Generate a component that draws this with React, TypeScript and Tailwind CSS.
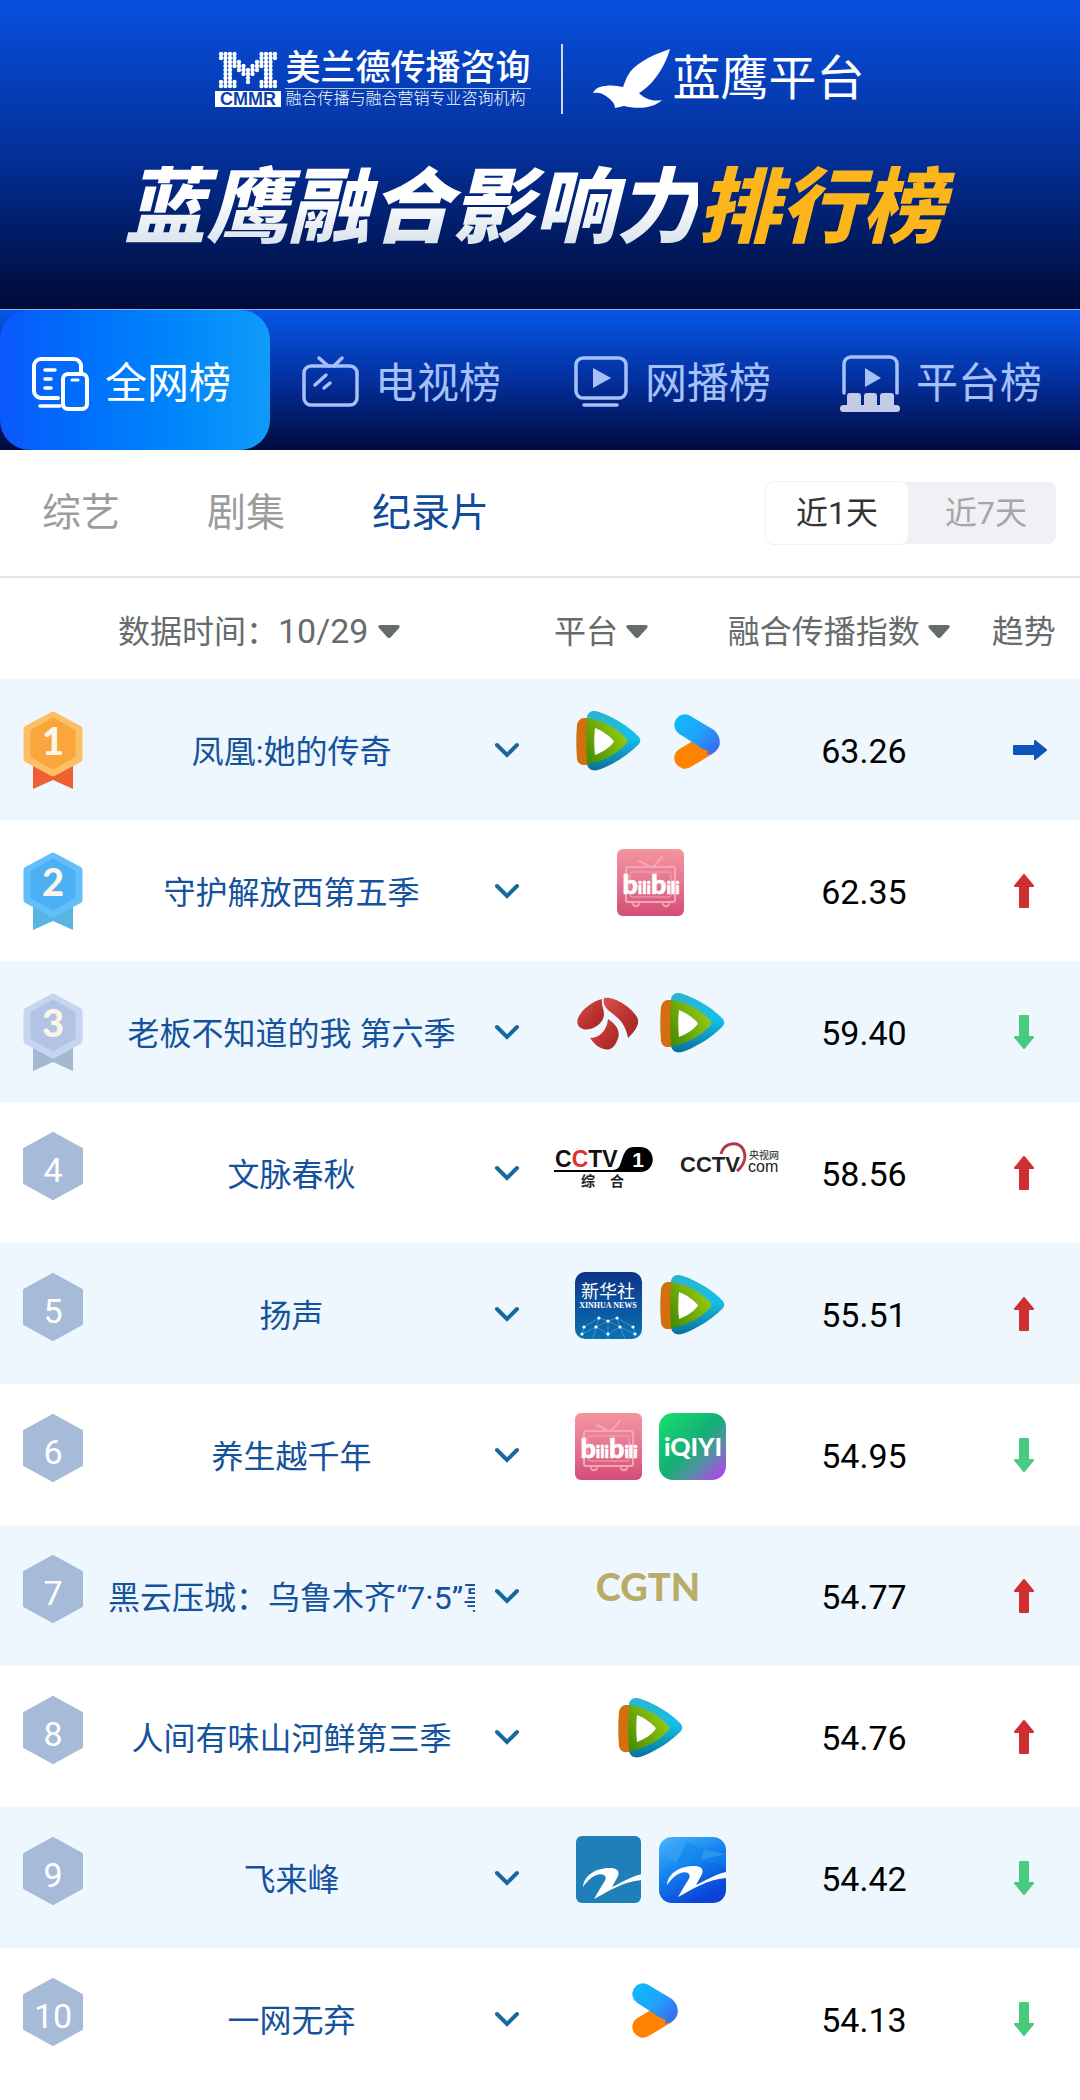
import type { ReactNode } from 'react';

type Trend = 'up' | 'down' | 'flat';

const BOARDS = [
  { name: '全网榜', icon: <AllIcon />, active: true },
  { name: '电视榜', icon: <TvIcon />, active: false },
  { name: '网播榜', icon: <WebIcon />, active: false },
  { name: '平台榜', icon: <PlatformIcon />, active: false },
];

const CATEGORIES = ['综艺', '剧集', '纪录片'];

const ROWS: { title: string; platforms: ReactNode[]; score: string; trend: Trend }[] = [
  { title: '凤凰:她的传奇', platforms: [<Tencent />, <Youku />], score: '63.26', trend: 'flat' },
  { title: '守护解放西第五季', platforms: [<Bilibili />], score: '62.35', trend: 'up' },
  { title: '老板不知道的我 第六季', platforms: [<Jiangsu />, <Tencent />], score: '59.40', trend: 'down' },
  { title: '文脉春秋', platforms: [<Cctv1 />, <CctvCom />], score: '58.56', trend: 'up' },
  { title: '扬声', platforms: [<Xinhua />, <Tencent />], score: '55.51', trend: 'up' },
  { title: '养生越千年', platforms: [<Bilibili />, <Iqiyi />], score: '54.95', trend: 'down' },
  { title: '黑云压城：乌鲁木齐“7·5”事件', platforms: [<Cgtn />], score: '54.77', trend: 'up' },
  { title: '人间有味山河鲜第三季', platforms: [<Tencent />], score: '54.76', trend: 'up' },
  { title: '飞来峰', platforms: [<Zhejiang />, <ZhejiangApp />], score: '54.42', trend: 'down' },
  { title: '一网无弃', platforms: [<Youku />], score: '54.13', trend: 'down' },
];

function AllIcon() {
  return (
    <svg viewBox="0 0 58 58" className="size-[58px]" fill="none" stroke="currentColor" strokeWidth="4" strokeLinecap="round">
      <path d="M27 44H10a7 7 0 0 1-7-7V12a7 7 0 0 1 7-7h33a7 7 0 0 1 7 7v6" />
      <path d="M14 16h10M14 25h6M14 34h6" strokeWidth="3.5" />
      <path d="M9 52h20" strokeWidth="3.5" />
      <rect x="32" y="20" width="24" height="35" rx="5" />
      <path d="M41 26h6" strokeWidth="3" />
    </svg>
  );
}

function TvIcon() {
  return (
    <svg viewBox="0 0 58 58" className="size-[58px]" fill="none" stroke="currentColor" strokeWidth="3.5" strokeLinecap="round">
      <rect x="3" y="12" width="53" height="39" rx="7" />
      <path d="M18 4l9 8M41 4l-8 8M25 21L14 31M29 29l-6 5" />
    </svg>
  );
}

function WebIcon() {
  return (
    <svg viewBox="0 0 58 58" className="size-[58px]" fill="none" stroke="currentColor" strokeWidth="3.5" strokeLinecap="round">
      <rect x="5" y="4" width="50" height="40" rx="7" />
      <path d="M13 51h33" />
      <path d="M22 14v20l18-10z" fill="currentColor" stroke="none" />
    </svg>
  );
}

function PlatformIcon() {
  return (
    <svg viewBox="0 0 60 58" className="h-[58px] w-[60px]" fill="none" stroke="currentColor" strokeWidth="3.5" strokeLinecap="round">
      <path d="M4 39V10a7 7 0 0 1 7-7h39a7 7 0 0 1 7 7v29" />
      <path d="M25 14v19l16-9z" fill="currentColor" stroke="none" />
      <g fill="currentColor" stroke="none" className="text-[#c3cbe6]">
        <rect x="7" y="39" width="14" height="15" rx="3" />
        <rect x="24" y="39" width="13" height="15" rx="3" />
        <rect x="40" y="39" width="14" height="15" rx="3" />
        <rect x="0" y="51" width="60" height="7" rx="3.5" />
      </g>
    </svg>
  );
}

const M_ROWS = [
  '1111000001111',
  '1111000001111',
  '0111100011110',
  '0111110111110',
  '0110111110110',
  '0110011100110',
  '0110001000110',
  '1111001001111',
  '1111000001111',
];

function CmmrLogo() {
  return (
    <svg viewBox="0 0 66 56" className="h-14 w-[66px]">
      <g fill="#fff">
        {M_ROWS.map((row, y) =>
          row.split('').map((dot, x) =>
            dot === '1' ? <circle key={`${x}-${y}`} cx={6 + x * 4.5} cy={3 + y * 4} r="2.2" /> : null,
          ),
        )}
        <rect y="40" width="66" height="16" />
      </g>
      <text x="33" y="54" textAnchor="middle" fontFamily="Liberation Sans" fontWeight="700" fontSize="18" fill="#0a3fae">
        CMMR
      </text>
    </svg>
  );
}

function Eagle() {
  return (
    <svg viewBox="0 0 78 60" className="h-[60px] w-[78px]" fill="#fff">
      <path d="M77 0C62 5 46 12 37 23c-4 6-5 10-7 15-8-2-16-2-23 0-4 1-6 4-7 6 5-1 9 0 13 3 5 4 9 7 9 12l9-2c12 3 29 3 38-6-9 2-17-1-23-7C60 36 72 18 77 0z" />
    </svg>
  );
}

function Tencent() {
  return (
    <svg viewBox="0 0 67 67" className="size-[67px]">
      <defs>
        <linearGradient id="tx-blue" x1="0" y1="0" x2="0" y2="1">
          <stop offset="0" stopColor="#2db4cf" />
          <stop offset="0.45" stopColor="#14c0e8" />
          <stop offset="1" stopColor="#08709a" />
        </linearGradient>
        <linearGradient id="tx-green" x1="0" y1="1" x2="1" y2="0.3">
          <stop offset="0" stopColor="#3f8a00" />
          <stop offset="1" stopColor="#9ccb12" />
        </linearGradient>
      </defs>
      <path d="M12 9c1-6 7-7 12-5 15 5 29 14 39 24 3 3 3 6 0 9-10 10-24 19-37 24-7 3-13 1-14-5z" fill="url(#tx-blue)" />
      <path d="M12 10H9c-4 0-6 3-7 7-1 11-1 23 0 34 1 4 3 6 7 6h4z" fill="#d2700f" />
      <path d="M12 10c15 2 28 9 38 19 3 3 3 5 0 8-10 10-23 17-38 19-1-15-1-31 0-46z" fill="url(#tx-green)" />
      <path d="M20 20c8 3 14 8 18 12 1 1 1 2 0 3-4 5-10 9-18 12-1-9-1-18 0-27z" fill="#fff" />
    </svg>
  );
}

function Youku() {
  return (
    <svg viewBox="0 0 67 67" className="size-[67px]" fill="none" strokeWidth="21" strokeLinecap="round">
      <defs>
        <linearGradient id="yk-blue" gradientUnits="userSpaceOnUse" x1="20" y1="10" x2="56" y2="42">
          <stop offset="0" stopColor="#0fb8fb" />
          <stop offset="0.5" stopColor="#1fa4fb" />
          <stop offset="1" stopColor="#3a6cf0" />
        </linearGradient>
      </defs>
      <path d="M26 50l22-13" stroke="#ff8200" />
      <path d="M26 17l22 13q4 4 1 6" stroke="url(#yk-blue)" strokeLinejoin="round" />
      <path d="M26 50l12-7" stroke="#ff8200" />
      <path d="M26 17l23 15" stroke="url(#yk-blue)" />
    </svg>
  );
}

function Bilibili() {
  return (
    <svg viewBox="0 0 67 67" className="size-[67px]">
      <defs>
        <linearGradient id="bili" x1="0" y1="0" x2="0" y2="1">
          <stop offset="0" stopColor="#f5949f" />
          <stop offset="0.5" stopColor="#e47791" />
          <stop offset="1" stopColor="#d44c76" />
        </linearGradient>
      </defs>
      <rect width="67" height="67" rx="6" fill="url(#bili)" />
      <g fill="none" stroke="#f6a5b5" strokeWidth="2" strokeLinecap="round">
        <rect x="9" y="18" width="49" height="35" rx="2" />
        <rect x="13" y="23" width="41" height="25" rx="2" strokeWidth="1" />
        <path d="M22 12l12 6M45 8l-9 10M16 55c1 3 5 3 6 0M46 55c1 3 5 3 6 0" />
      </g>
      <text x="34" y="45" textAnchor="middle" fontFamily="Lato" fontWeight="900" fill="#fff" stroke="#fff" strokeWidth="0.6">
        <tspan fontSize="27">b</tspan>
        <tspan fontSize="17">ili</tspan>
        <tspan fontSize="27">b</tspan>
        <tspan fontSize="17">ili</tspan>
      </text>
    </svg>
  );
}

function Jiangsu() {
  return (
    <svg viewBox="0 0 67 67" className="size-[67px]">
      <defs>
        <linearGradient id="js-red" x1="0" y1="0" x2="1" y2="1">
          <stop offset="0" stopColor="#d9554c" />
          <stop offset="0.5" stopColor="#bf3431" />
          <stop offset="1" stopColor="#9c2527" />
        </linearGradient>
      </defs>
      <g fill="url(#js-red)">
        <path d="M27 9C18 11 7 19 3 28c-3 8 4 13 12 11 8-2 14-8 14-15 0-5-3-9-2-15z" />
        <path d="M29 8c10-2 27 9 33 19 4 7-3 15-9 21C51 36 45 29 38 24c-6-4-11-9-9-16z" />
        <path d="M33 29c8 5 14 13 9 22-4 9-9 10-16 7-5-2-8-6-11-10 9 0 17-7 18-19z" />
      </g>
    </svg>
  );
}

function Cctv1() {
  return (
    <svg viewBox="0 0 100 67" className="h-[67px] w-[100px]">
      <path d="M0 39h59c7-1 7-5 9-11 3-8 5-12 12-12h6c17 0 17 25 0 25H0z" fill="#000" />
      <text x="1" y="36" fontFamily="Liberation Sans" fontWeight="700" fontSize="23" fill="#111">
        C<tspan fill="#e0312f">C</tspan>TV
      </text>
      <text x="84" y="36" textAnchor="middle" fontFamily="Liberation Sans" fontWeight="700" fontSize="21" fill="#fff">1</text>
      <text x="27" y="55" fontFamily="Noto Sans CJK SC" fontWeight="700" fontSize="14" fill="#222">综</text>
      <text x="56" y="55" fontFamily="Noto Sans CJK SC" fontWeight="700" fontSize="14" fill="#222">合</text>
    </svg>
  );
}

function CctvCom() {
  return (
    <svg viewBox="0 0 100 67" className="h-[67px] w-[100px]">
      <path d="M41 23C44 11 58 10 63 18c4 8 1 16-6 22" fill="none" stroke="#b23a48" strokeWidth="3" />
      <text x="0" y="41" fontFamily="Liberation Sans" fontWeight="700" fontSize="22" fill="#222">CCTV</text>
      <text x="69" y="28" fontFamily="Noto Sans CJK SC" fontWeight="500" fontSize="10" fill="#444">央视网</text>
      <text x="68" y="41" fontFamily="Liberation Sans" fontSize="16" fill="#222">com</text>
    </svg>
  );
}

const NODES = [
  [7, 62], [33, 62], [60, 62], [9, 55], [21, 55], [45, 55], [58, 55], [33, 49], [24, 46], [42, 46],
];

function Xinhua() {
  return (
    <svg viewBox="0 0 67 67" className="size-[67px]">
      <defs>
        <linearGradient id="xinhua" x1="0" y1="0" x2="0" y2="1">
          <stop offset="0" stopColor="#0c3486" />
          <stop offset="1" stopColor="#0b72b4" />
        </linearGradient>
      </defs>
      <rect width="67" height="67" rx="10" fill="url(#xinhua)" />
      <path d="M7 62L9 55 24 46 33 49 42 46 58 55 60 62M7 62L21 55 33 62 45 55 60 62M21 55L24 46M33 49v18M45 55L42 46M21 55l12-6 12 6M18 67l3-12M50 67l-5-12" fill="none" stroke="#5db0dc" strokeWidth="0.6" />
      {NODES.map(([x, y]) => (
        <circle key={`${x}-${y}`} cx={x} cy={y} r="1.6" fill="#fff" />
      ))}
      <text x="33" y="26" textAnchor="middle" fontFamily="Noto Sans CJK SC" fontSize="18" fill="#fff">新华社</text>
      <text x="33" y="36" textAnchor="middle" fontFamily="Liberation Serif" fontWeight="700" fontSize="8" fill="#fff">XINHUA NEWS</text>
    </svg>
  );
}

function Iqiyi() {
  return (
    <svg viewBox="0 0 67 67" className="size-[67px]">
      <defs>
        <linearGradient id="iqiyi" x1="0" y1="0" x2="1" y2="1">
          <stop offset="0.1" stopColor="#14d870" />
          <stop offset="0.5" stopColor="#16ad76" />
          <stop offset="0.68" stopColor="#4d95a0" />
          <stop offset="0.9" stopColor="#a24fdf" />
        </linearGradient>
      </defs>
      <rect width="67" height="67" rx="14" fill="url(#iqiyi)" />
      <text x="34" y="43" textAnchor="middle" fontFamily="Lato" fontWeight="900" fontSize="25" fill="#fff">iQIYI</text>
    </svg>
  );
}

function Cgtn() {
  return (
    <svg viewBox="0 0 108 67" className="h-[67px] w-[108px]">
      <text x="52" y="47" textAnchor="middle" fontFamily="Lato" fontWeight="900" fontSize="38" fill="#b9ac69">CGTN</text>
    </svg>
  );
}

const Z_PATH = 'M8 51C9 37 25 31 37 32c7 1 8 5 5 10l-5 9c9-4 17-10 30-13v6c-20 2-31 10-48 19l7-12c3-5 7-9 3-12-6-3-15 3-21 12z';

function Zhejiang() {
  return (
    <svg viewBox="0 0 67 67" className="size-[67px]">
      <rect x="1" width="65" height="67" rx="6" fill="#1f7fb9" />
      <path d={Z_PATH} fill="#fff" />
    </svg>
  );
}

function ZhejiangApp() {
  return (
    <svg viewBox="0 0 67 67" className="size-[67px]">
      <defs>
        <linearGradient id="zj-app" x1="0" y1="0" x2="0.5" y2="1">
          <stop offset="0" stopColor="#49b7ff" />
          <stop offset="0.5" stopColor="#1384f0" />
          <stop offset="1" stopColor="#0b43d8" />
        </linearGradient>
      </defs>
      <rect y="1" width="67" height="66" rx="13" fill="url(#zj-app)" />
      <path d="M4 19l24-13 17 8 22 4v12L42 24 18 26z" fill="#0c86ea" opacity="0.5" />
      <path d="M4 19l14 7 10-20zM45 14l-3 10 25-6z" fill="#7fcbff" opacity="0.25" />
      <path d={Z_PATH} fill="#fff" transform="translate(0 -2)" />
    </svg>
  );
}

function TrendIcon({ trend }: { trend: Trend }) {
  if (trend === 'flat') {
    return (
      <svg viewBox="0 0 36 22" className="h-[22px] w-9" role="img" aria-label="持平" fill="#0c55ba" stroke="#0c55ba" strokeWidth="2" strokeLinejoin="round">
        <path d="M2 7h21V2l11 9-11 9v-5H2z" />
      </svg>
    );
  }
  const color = trend === 'up' ? '#cf2f30' : '#47cb7d';
  const d = trend === 'up' ? 'M8 34V13H3l9-11 9 11h-5v21z' : 'M8 2v21H3l9 11 9-11h-5V2z';
  return (
    <svg viewBox="0 0 24 36" className="h-9 w-6" role="img" aria-label={trend === 'up' ? '上升' : '下降'} fill={color} stroke={color} strokeWidth="2" strokeLinejoin="round">
      <path d={d} />
    </svg>
  );
}

const MEDALS = [
  { outer: '#fdbf63', inner: '#f9a63c', ribbon: '#ef5f34' },
  { outer: '#63bff9', inner: '#4cb0f5', ribbon: '#58b4e2' },
  { outer: '#c6d4ef', inner: '#b3c3e4', ribbon: '#a3b9d2' },
];

function Rank({ rank }: { rank: number }) {
  const medal = MEDALS[rank - 1];
  if (medal) {
    return (
      <svg viewBox="0 0 62 80" className="h-20 w-[62px]" role="img" aria-label={`第${rank}名`}>
        <path d="M11 56v24l20-9 20 9V56z" fill={medal.ribbon} />
        <path d="M31 6l26 14v30L31 64 5 50V20z" fill={medal.outer} stroke={medal.outer} strokeWidth="7" strokeLinejoin="round" />
        <path d="M31 10l21 12v25L31 59 10 47V22z" fill={medal.inner} stroke={medal.inner} strokeWidth="3" strokeLinejoin="round" />
        <text x="31" y="46" textAnchor="middle" fontFamily="Lato" fontWeight="900" fontSize="38" fill="#fdf6e8">{rank}</text>
      </svg>
    );
  }
  return (
    <svg viewBox="0 0 62 68" className="h-[68px] w-[62px]" role="img" aria-label={`第${rank}名`}>
      <path d="M31 1l29 16v34L31 67 2 51V17z" fill="#a5bbd7" stroke="#a5bbd7" strokeWidth="2" strokeLinejoin="round" />
      <text x="31" y="50" textAnchor="middle" fontFamily="Roboto" fontSize="34" fill="#fff">{rank}</text>
    </svg>
  );
}

function Caret() {
  return (
    <svg viewBox="0 0 22 14" className="h-3.5 w-[22px]" fill="currentColor">
      <path d="M2 0h18q3 1 1 3l-8 9q-2 2-4 0L1 3Q-1 1 2 0z" />
    </svg>
  );
}

export default function App() {
  return (
    <div className="min-h-screen bg-white font-[Roboto,'Noto_Sans_CJK_SC',sans-serif]">
      <header className="flex flex-col items-center gap-10 border-b border-[#8fb2ee] bg-linear-to-b from-[#0850e0] via-[#04309a] to-[#000b38] pt-11 pb-[47px] text-white">
        <div className="flex items-center gap-[30px]">
          <div className="flex items-center gap-1">
            <CmmrLogo />
            <div>
              <p className="border-b border-white/70 text-[35px] leading-[38px] font-medium">美兰德传播咨询</p>
              <p className="text-base leading-5 font-light">融合传播与融合营销专业咨询机构</p>
            </div>
          </div>
          <div className="h-[70px] w-0.5 bg-white/80" />
          <div className="flex items-center gap-0.5">
            <Eagle />
            <p className="text-5xl leading-[60px]">蓝鹰平台</p>
          </div>
        </div>
        <h1 className="pr-3 text-[82px] leading-[108px] font-black whitespace-nowrap italic">
          <span className="bg-linear-to-b from-white from-40% to-[#cfdbe6] bg-clip-text text-transparent">蓝鹰融合影响力</span>
          <span className="text-[#fdb51c]">排行榜</span>
        </h1>
      </header>

      <nav className="grid grid-cols-4 bg-linear-to-b from-[#0757e8] via-[#04309e] to-[#010a40]">
        {BOARDS.map((board) => (
          <button
            key={board.name}
            type="button"
            className={
              board.active
                ? 'flex h-[140px] items-center justify-center gap-4 rounded-[30px] bg-linear-to-r from-[#0c58fc] to-[#119bf8] pt-1.5 pr-2 text-[42px] text-white'
                : 'flex h-[140px] items-center justify-center gap-4 pt-1.5 pr-2 text-[42px] text-[#a6c0f8]'
            }
          >
            {board.icon}
            {board.name}
          </button>
        ))}
      </nav>

      <div className="flex items-center justify-between border-b-2 border-[#e6e6e6] py-8 pr-6 pl-[42px]">
        <div className="flex gap-[87px] text-[39px] leading-[62px] text-[#9c9c9c]">
          {CATEGORIES.map((name) => (
            <button key={name} type="button" className={name === '纪录片' ? 'text-[#0f4c9c]' : ''}>
              {name}
            </button>
          ))}
        </div>
        <div className="flex rounded-lg bg-[#f1f0f4] text-[32px] leading-[62px]">
          <button type="button" className="w-[142px] rounded-lg bg-white text-[#333] ring-1 ring-[#f1f1f1]">
            近1天
          </button>
          <button type="button" className="w-[148px] pl-2 text-[#a6a6a8]">
            近7天
          </button>
        </div>
      </div>

      <table className="w-full table-fixed border-collapse text-[32px]">
        <colgroup>
          <col className="w-[10%]" />
          <col className="w-[34%]" />
          <col className="w-[7.3%]" />
          <col className="w-[17.8%]" />
          <col className="w-[21.8%]" />
          <col />
        </colgroup>
        <thead>
          <tr className="h-[101px] text-[#666b6b]">
            <th />
            <th colSpan={2} className="pt-1.5 pl-2.5 text-left font-normal">
              <button type="button" className="flex items-center gap-2.5">
                <span>
                  数据时间：<span className="text-[34px]">10/29</span>
                </span>
                <Caret />
              </button>
            </th>
            <th className="p-0 pt-1.5 font-normal">
              <button type="button" className="flex items-center gap-2 whitespace-nowrap">
                平台
                <Caret />
              </button>
            </th>
            <th className="pt-1.5 pr-8 font-normal">
              <div className="flex justify-end">
                <button type="button" className="flex shrink-0 items-center gap-2 whitespace-nowrap">
                  融合传播指数
                  <Caret />
                </button>
              </div>
            </th>
            <th className="pt-1.5 pl-2.5 text-left font-normal">趋势</th>
          </tr>
        </thead>
        <tbody>
          {ROWS.map((row, i) => (
            <tr key={row.title} className="h-[141px] odd:bg-[#eff7fe]">
              <td className="pt-[30px] pl-[22px] align-top">
                <Rank rank={i + 1} />
              </td>
              <td className="pt-1 text-center text-[#15529c]">
                <div className="overflow-hidden whitespace-nowrap">{row.title}</div>
              </td>
              <td className="pl-[18px]">
                <button type="button" aria-label="展开" className="flex">
                  <svg viewBox="0 0 28 20" className="h-5 w-7" fill="none" stroke="#17689c" strokeWidth="4" strokeLinecap="round">
                    <path d="M4 5l10 10L24 5" />
                  </svg>
                </button>
              </td>
              <td className="pt-[29px] align-top">
                <div className={i === 3 ? 'flex gap-[26px]' : 'flex justify-center gap-[17px]'}>
                  {row.platforms.map((logo, n) => (
                    <span key={n} className="shrink-0">{logo}</span>
                  ))}
                </div>
              </td>
              <td className="pt-1 text-center text-[34px] text-black">{row.score}</td>
              <td className="pl-[30px]">
                <TrendIcon trend={row.trend} />
              </td>
            </tr>
          ))}
        </tbody>
      </table>
    </div>
  );
}
